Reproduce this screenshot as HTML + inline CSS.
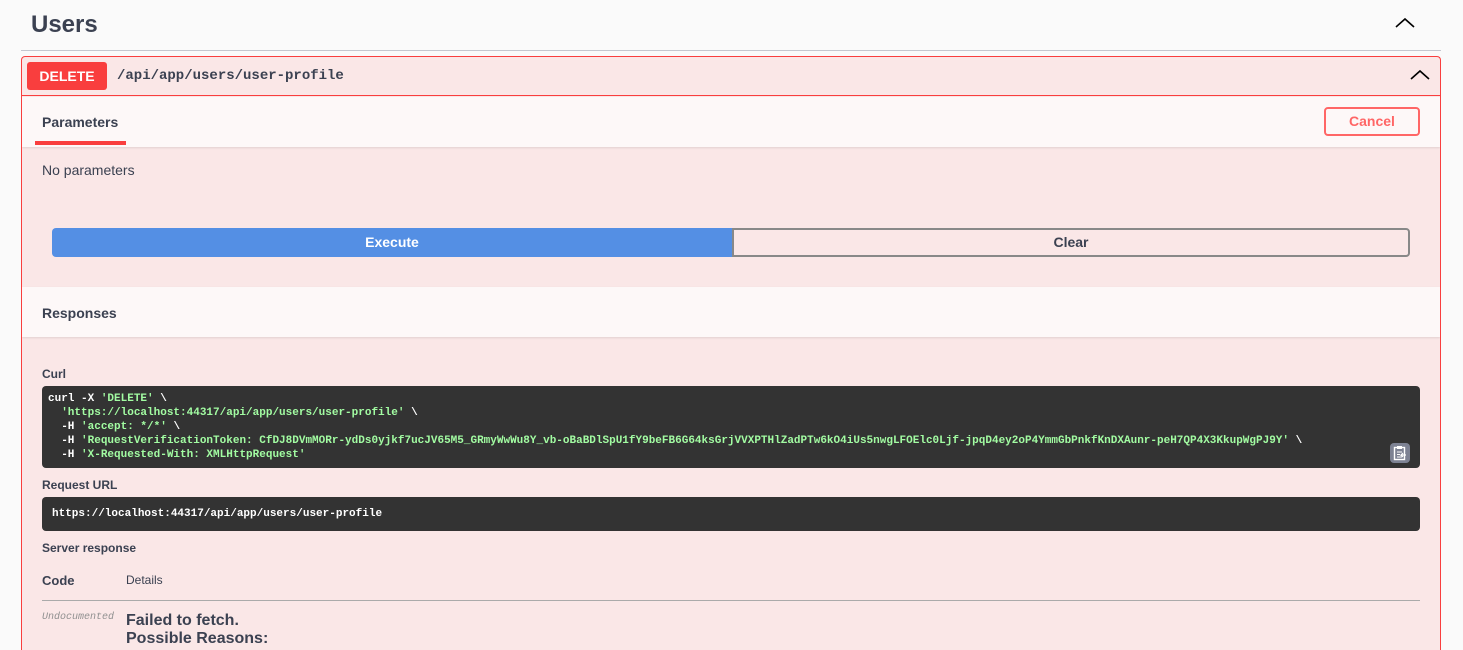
<!DOCTYPE html>
<html style="width:1463px;height:650px;overflow:hidden"><head><meta charset="utf-8"><style>
*{box-sizing:border-box;margin:0;padding:0}
body{width:1463px;height:650px;overflow:hidden;background:#fafafa;font-family:"Liberation Sans",Arial,sans-serif;color:#3b4151;position:relative}
.a{position:absolute}
.mono{font-family:"Liberation Mono",monospace}
</style></head><body>
<div class="a" style="left:31px;top:11px;font-size:24px;font-weight:bold;">Users</div>
<svg class="a" style="left:1395px;top:17px" width="20" height="12"><path d="M1 10 L10 2 L19 10" fill="none" stroke="#000" stroke-width="1.6"/></svg>
<div class="a" style="left:21px;top:50px;width:1420px;height:1px;background:#c4c7cf"></div>

<div class="a" style="left:21px;top:56px;width:1420px;height:594px;border:1px solid #f93e3e;border-bottom:none;border-radius:4px 4px 0 0;background:#fae7e7;overflow:hidden">
  <div class="a" style="left:0;top:0;width:100%;height:39px;border-bottom:1px solid #f93e3e"></div>
  <div class="a" style="left:5px;top:5px;width:80px;height:28px;background:#f93e3e;border-radius:3px;color:#fff;font-weight:bold;font-size:14px;text-align:center;line-height:28px">DELETE</div>
  <div class="a mono" style="left:95px;top:11px;font-size:14px;font-weight:bold;color:#3b4151">/api/app/users/user-profile</div>
  <svg class="a" style="left:1388px;top:12px" width="20" height="12"><path d="M1 10 L10 2 L19 10" fill="none" stroke="#000" stroke-width="1.6"/></svg>

  <div class="a" style="left:0;top:40px;width:100%;height:50px;background:#fdf8f8;box-shadow:0 1px 2px rgba(0,0,0,.1)"></div>
  <div class="a" style="left:20px;top:57px;font-size:14px;font-weight:bold">Parameters</div>
  <div class="a" style="left:13px;top:84px;width:91px;height:4px;background:#f93e3e"></div>
  <div class="a" style="left:1302px;top:50px;width:96px;height:29px;border:2px solid #f66;border-radius:4px;color:#f66;font-weight:bold;font-size:14px;text-align:center;line-height:25px">Cancel</div>

  <div class="a" style="left:20px;top:105px;font-size:14px">No parameters</div>
  <div class="a" style="left:30px;top:171px;width:680px;height:29px;background:#548fe4;border-radius:4px 0 0 4px;color:#fff;font-weight:bold;font-size:14px;text-align:center;line-height:29px">Execute</div>
  <div class="a" style="left:710px;top:171px;width:678px;height:29px;border:2px solid #888;border-radius:0 4px 4px 0;font-weight:bold;font-size:14px;text-align:center;line-height:25px;color:#3b4151">Clear</div>

  <div class="a" style="left:0;top:230px;width:100%;height:50px;background:#fdf8f8;box-shadow:0 1px 2px rgba(0,0,0,.1)"></div>
  <div class="a" style="left:20px;top:248px;font-size:14px;font-weight:bold">Responses</div>

  <div class="a" style="left:20px;top:310px;font-size:12px;font-weight:bold">Curl</div>
  <div class="a mono" style="left:20px;top:329px;width:1378px;height:82px;background:#333;border-radius:4px;color:#fff;font-size:11px;font-weight:bold;line-height:14px;padding:6px 6px;white-space:pre">curl -X <span style="color:#a2fca2">'DELETE'</span> \
  <span style="color:#a2fca2">'https://localhost:44317/api/app/users/user-profile'</span> \
  -H <span style="color:#a2fca2">'accept: */*'</span> \
  -H <span style="color:#a2fca2">'RequestVerificationToken: CfDJ8DVmMORr-ydDs0yjkf7ucJV65M5_GRmyWwWu8Y_vb-oBaBDlSpU1fY9beFB6G64ksGrjVVXPTHlZadPTw6kO4iUs5nwgLFOElc0Ljf-jpqD4ey2oP4YmmGbPnkfKnDXAunr-peH7QP4X3KkupWgPJ9Y'</span> \
  -H <span style="color:#a2fca2">'X-Requested-With: XMLHttpRequest'</span></div>
  <div class="a" style="left:1368px;top:386px;width:20px;height:20px;background:#7d8293;border-radius:4px"></div>
  <svg class="a" style="left:1371px;top:388px" width="14" height="16"><rect x="1.5" y="2.5" width="10" height="12" fill="none" stroke="#fff" stroke-width="1.4"/><rect x="4" y="1" width="5" height="3" fill="#fff"/><path d="M4 7h5M4 9.5h3M4 12h5" stroke="#fff" stroke-width="1"/><path d="M13 10h-5l2-2M8 10l2 2" stroke="#fff" stroke-width="1.2" fill="none"/></svg>

  <div class="a" style="left:20px;top:421px;font-size:12px;font-weight:bold">Request URL</div>
  <div class="a mono" style="left:20px;top:440px;width:1378px;height:34px;background:#333;border-radius:4px;color:#fff;font-size:11px;font-weight:bold;line-height:34px;padding-left:10px">https://localhost:44317/api/app/users/user-profile</div>
  <div class="a" style="left:20px;top:484px;font-size:12px;font-weight:bold">Server response</div>
  <div class="a" style="left:20px;top:516px;font-size:13px;font-weight:bold">Code</div>
  <div class="a" style="left:104px;top:516px;font-size:12px">Details</div>
  <div class="a" style="left:20px;top:543px;width:1378px;height:1px;background:#aaa"></div>
  <div class="a mono" style="left:20px;top:555px;font-size:10px;font-style:italic;color:#909090">Undocumented</div>
  <div class="a" style="left:104px;top:555px;font-size:16px;font-weight:bold;line-height:18px">Failed to fetch.<br>Possible Reasons:</div>
</div>
</body></html>
